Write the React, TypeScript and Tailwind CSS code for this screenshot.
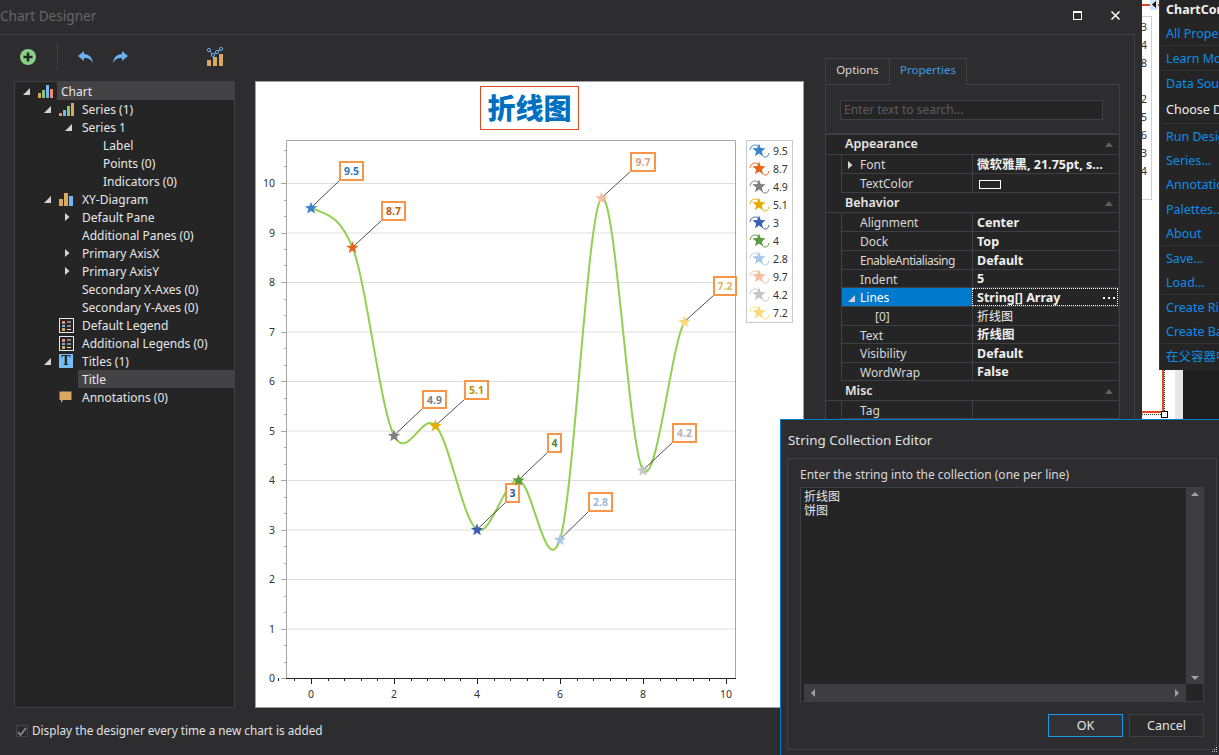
const FONT = "font-['Noto_Sans','Noto_Sans_CJK_SC',sans-serif]";

// ---------- small icons ----------
const Expanded = () => (
  <svg width="7" height="7" viewBox="0 0 7 7">
    <path d="M7 0V7H0Z" fill="#d4d4d4" />
  </svg>
);
const Collapsed = () => (
  <svg width="5" height="8" viewBox="0 0 5 8">
    <path d="M0 0L4.5 4L0 8Z" fill="#d4d4d4" />
  </svg>
);
const ChartIcon = () => (
  <svg width="15" height="14" viewBox="0 0 15 14">
    <rect x="0" y="9" width="3" height="5" fill="#d8a863" />
    <rect x="4" y="6" width="3" height="8" fill="#8cc66c" />
    <rect x="8" y="1" width="3" height="13" fill="#6fb8f5" />
    <rect x="12" y="5" width="3" height="9" fill="#ef8a75" />
  </svg>
);
const SeriesIcon = () => (
  <svg width="15" height="14" viewBox="0 0 15 14">
    <rect x="0" y="11" width="3" height="3" fill="#ef8a75" />
    <rect x="4" y="8" width="3" height="6" fill="#6fb8f5" />
    <rect x="8" y="4" width="3" height="10" fill="#8cc66c" />
    <rect x="12" y="1" width="3" height="13" fill="#d8a863" />
  </svg>
);
const DiagramIcon = () => (
  <svg width="15" height="13" viewBox="0 0 15 13">
    <rect x="0" y="6" width="4" height="7" fill="#d8a863" />
    <rect x="5" y="0" width="4" height="13" fill="#d8a863" />
    <rect x="10" y="3" width="4" height="10" fill="#6fb8f5" />
  </svg>
);
const LegendIcon = () => (
  <svg width="15" height="15" viewBox="0 0 15 15">
    <rect x="0.5" y="0.5" width="14" height="14" fill="none" stroke="#e8e8e8" />
    <rect x="3" y="3" width="3" height="3" fill="#ef8a75" />
    <rect x="3" y="7" width="3" height="2" fill="#6fb8f5" />
    <rect x="3" y="10" width="3" height="3" fill="#d8a863" />
    <path d="M8 4H12M8 8H12M8 11.5H12" stroke="#e8e8e8" />
  </svg>
);
const TitleIcon = () => (
  <span className="flex h-[14px] w-[14px] items-center justify-center bg-[#75bdf5] font-['Liberation_Serif',serif] text-[14px] leading-none font-bold text-[#1e1e1e]">
    T
  </span>
);
const NoteIcon = () => (
  <svg width="13" height="13" viewBox="0 0 13 13">
    <path d="M0.5 0.5H12.5V9H4L2 12V9H0.5Z" fill="#d8a863" />
  </svg>
);

// ---------- tree ----------
type TreeRow = {
  label: string;
  pad: string;
  arrow?: "open" | "closed";
  arrowCell?: string;
  icon?: React.ReactNode;
  selected?: boolean;
};

const treeRows: TreeRow[] = [
  { label: "Chart", pad: "pl-[6px]", arrow: "open", arrowCell: "w-[17px]", icon: <ChartIcon />, selected: true },
  { label: "Series (1)", pad: "pl-[27px]", arrow: "open", arrowCell: "w-[17px]", icon: <SeriesIcon /> },
  { label: "Series 1", pad: "pl-[48px]", arrow: "open", arrowCell: "w-[19px]" },
  { label: "Label", pad: "pl-[88px]" },
  { label: "Points (0)", pad: "pl-[88px]" },
  { label: "Indicators (0)", pad: "pl-[88px]" },
  { label: "XY-Diagram", pad: "pl-[27px]", arrow: "open", arrowCell: "w-[17px]", icon: <DiagramIcon /> },
  { label: "Default Pane", pad: "pl-[48px]", arrow: "closed", arrowCell: "w-[19px]" },
  { label: "Additional Panes (0)", pad: "pl-[67px]" },
  { label: "Primary AxisX", pad: "pl-[48px]", arrow: "closed", arrowCell: "w-[19px]" },
  { label: "Primary AxisY", pad: "pl-[48px]", arrow: "closed", arrowCell: "w-[19px]" },
  { label: "Secondary X-Axes (0)", pad: "pl-[67px]" },
  { label: "Secondary Y-Axes (0)", pad: "pl-[67px]" },
  { label: "Default Legend", pad: "pl-[44px]", icon: <LegendIcon /> },
  { label: "Additional Legends (0)", pad: "pl-[44px]", icon: <LegendIcon /> },
  { label: "Titles (1)", pad: "pl-[27px]", arrow: "open", arrowCell: "w-[17px]", icon: <TitleIcon /> },
  { label: "Title", pad: "pl-[67px]", selected: true },
  { label: "Annotations (0)", pad: "pl-[44px]", icon: <NoteIcon /> },
];

const Tree = () => (
  <div className="h-[627px] w-[221px] border border-[#3f3f46] bg-[#252526]">
    {treeRows.map((row) => (
      <div key={row.label} className={`flex h-[18px] items-center text-[12px] text-[#e6e6e6] ${row.pad}`}>
        {row.arrow && (
          <span className={`flex items-center pl-[2px] ${row.arrowCell}`}>
            {row.arrow === "open" ? <Expanded /> : <Collapsed />}
          </span>
        )}
        {row.icon && <span className="flex w-[23px] items-center">{row.icon}</span>}
        <span className={`-ml-1 flex h-full flex-1 items-center pt-[2px] pl-1 ${row.selected ? "bg-[#434346]" : ""}`}>
          {row.label}
        </span>
      </div>
    ))}
  </div>
);

// ---------- chart ----------
const X0 = 311;
const XU = 41.5;
const Y0 = 678;
const YU = 49.5;
const px = (x: number) => X0 + x * XU;
const py = (y: number) => Y0 - y * YU;

const points = [
  { v: 9.5, color: "#3a84c9", text: "#2e75b6", box: [340, 162, 23, 18] },
  { v: 8.7, color: "#e8641b", text: "#c55a11", box: [382, 202, 23, 18] },
  { v: 4.9, color: "#7f7f7f", text: "#7f7f7f", box: [423, 391, 23, 17] },
  { v: 5.1, color: "#e6ad00", text: "#bf9000", box: [465, 381, 23, 18] },
  { v: 3, color: "#3a5fb4", text: "#2f5597", box: [506, 484, 13, 18] },
  { v: 4, color: "#5a9a3e", text: "#548235", box: [548, 434, 13, 18] },
  { v: 2.8, color: "#a9c9e8", text: "#9dbad8", box: [589, 493, 23, 18] },
  { v: 9.7, color: "#f2bfa0", text: "#daa080", box: [631, 153, 24, 18] },
  { v: 4.2, color: "#c6c6c6", text: "#b4b4b4", box: [673, 424, 23, 18] },
  { v: 7.2, color: "#fbd97a", text: "#dcb860", box: [714, 277, 22, 18] },
];

const splinePath = () => {
  const v = points.map((p) => p.v);
  const slope = (i: number) => {
    if (i === 0) return (v[1] - v[0]) / 2;
    if (i === v.length - 1) return (v[i] - v[i - 1]) / 2;
    return ((v[i + 1] - v[i - 1]) / 2) * 0.9;
  };
  let d = `M${px(0)} ${py(v[0])}`;
  for (let i = 0; i < v.length - 1; i++) {
    d += ` C${px(i + 1 / 3)} ${py(v[i] + slope(i) / 3)} ${px(i + 2 / 3)} ${py(v[i + 1] - slope(i + 1) / 3)} ${px(i + 1)} ${py(v[i + 1])}`;
  }
  return d;
};

const starPath = (cx: number, cy: number, r: number) => {
  let d = "";
  for (let i = 0; i < 10; i++) {
    const rad = i % 2 === 0 ? r : r * 0.42;
    const a = (Math.PI / 5) * i - Math.PI / 2;
    d += `${i === 0 ? "M" : "L"}${(cx + rad * Math.cos(a)).toFixed(2)} ${(cy + rad * Math.sin(a)).toFixed(2)}`;
  }
  return d + "Z";
};

const range = (n: number) => Array.from({ length: n }, (_, i) => i);

const ChartPreview = () => (
  <div className="h-[627px] w-[549px] bg-white">
    <svg width="549" height="627" viewBox="255 81 549 627" className="font-['Noto_Sans','Noto_Sans_CJK_SC',sans-serif]">
      <rect x="255.5" y="81.5" width="548" height="626" fill="#fff" stroke="#a0a0a0" />
      {/* title */}
      <rect x="480.5" y="86.5" width="98" height="43" fill="#fff" stroke="#e04a1f" />
      <text x="529.5" y="119" textAnchor="middle" fontSize="28" fontWeight="900" fill="#0070c0">
        折线图
      </text>
      {/* grid */}
      {range(10).map((i) => (
        <line key={i} x1="287" x2="735" y1={py(i + 1) + 0.5} y2={py(i + 1) + 0.5} stroke="#dedede" />
      ))}
      <path d="M286.5 678V140.5H735.5V678" fill="none" stroke="#a6a6a6" />
      <line x1="286" x2="736" y1="678.5" y2="678.5" stroke="#222" />
      {/* y ticks */}
      {range(33).map((i) => (
        <line
          key={i}
          x1={i % 3 === 0 ? 281 : 284}
          x2="286"
          y1={Math.round(py(i / 3)) + 0.5}
          y2={Math.round(py(i / 3)) + 0.5}
          stroke="#a6a6a6"
        />
      ))}
      {range(11).map((i) => (
        <text key={i} x="275" y={py(i) + 4} textAnchor="end" fontSize="10.5" fill="#333">
          {i}
        </text>
      ))}
      {/* x ticks */}
      {range(28).map((i) => {
        const x = Math.round(px(-0.8 + i * 0.4)) + 0.5;
        return <line key={i} x1={x} x2={x} y1="678" y2={(i - 2) % 5 === 0 ? 684 : 681} stroke="#222" />;
      })}
      {[0, 2, 4, 6, 8, 10].map((i) => (
        <text key={i} x={px(i)} y="698" textAnchor="middle" fontSize="10.5" fill="#333">
          {i}
        </text>
      ))}
      {/* series */}
      <path d={splinePath()} fill="none" stroke="#92d050" strokeWidth="2" />
      {points.map((p, i) => (
        <g key={i}>
          <line x1={px(i)} y1={py(p.v)} x2={p.box[0]} y2={p.box[1] + p.box[3]} stroke="#222" strokeWidth="0.8" />
          <path d={starPath(px(i), py(p.v) + 0.5, 6.5)} fill={p.color} />
          <rect x={p.box[0]} y={p.box[1]} width={p.box[2]} height={p.box[3]} fill="#fff" stroke="#f79646" strokeWidth="2" />
          <text
            x={p.box[0] + p.box[2] / 2}
            y={p.box[1] + 13}
            textAnchor="middle"
            fontSize="10.5"
            fontWeight="700"
            fill={p.text}
          >
            {p.v}
          </text>
        </g>
      ))}
      {/* legend */}
      <rect x="746.5" y="140.5" width="46" height="182" fill="#fff" stroke="#c8c8c8" />
      {points.map((p, i) => {
        const y = 151 + i * 18;
        return (
          <g key={i}>
            <path
              d={`M750 ${y - 1}C751 ${y - 6} 755 ${y - 7} 758 ${y - 5}M762 ${y + 4}C764 ${y + 7} 768 ${y + 7} 769 ${y + 2}`}
              fill="none"
              stroke={p.color}
            />
            <path d={starPath(759, y - 0.5, 7)} fill={p.color} />
            <text x="773" y={y + 4} fontSize="10.5" fill="#333">
              {p.v}
            </text>
          </g>
        );
      })}
    </svg>
  </div>
);

// ---------- property grid ----------
type Prop = { name: string; value?: string; h: string; swatch?: boolean; plain?: boolean };

const CatHeader = ({ label, h }: { label: string; h: string }) => (
  <div className={`flex items-center justify-between border-b border-[#3f3f46] pr-[5px] pl-[19px] ${h}`}>
    <span className="text-[12.5px] font-semibold text-[#e6e6e6]">{label}</span>
    <svg width="8" height="5" viewBox="0 0 8 5">
      <path d="M4 0L8 5H0Z" fill="#5f5f62" />
    </svg>
  </div>
);

const PropRow = ({
  name,
  value,
  h,
  swatch,
  plain,
  active,
  arrow,
  indent,
  nameClass,
}: Prop & { active?: boolean; arrow?: React.ReactNode; indent?: string; nameClass?: string }) => (
  <div className={`ml-[15px] flex border-b border-l border-[#3f3f46] text-[12px] ${h}`}>
    <div
      className={`relative flex w-[130px] shrink-0 items-center pt-[2px] ${indent ?? "pl-[18px]"} ${nameClass ?? ""} ${active ? "bg-[#007acc] text-white" : "text-[#d8d8d8]"}`}
    >
      {arrow && <span className="absolute left-[6px] flex items-center">{arrow}</span>}
      {name}
    </div>
    <div
      className={`flex flex-1 items-center border-l border-[#3f3f46] pt-[2px] pl-[4px] whitespace-nowrap text-[#f0f0f0] ${plain ? "" : "text-[12.5px] font-bold"} ${active ? "justify-between border border-dotted border-white pr-[2px]" : ""}`}
    >
      {swatch ? <span className="ml-[2px] h-[9px] w-[22px] border border-white" /> : value}
      {active && (
        <svg width="12" height="2" viewBox="0 0 12 2">
          <path d="M0 0h2v2H0zM5 0h2v2H5zM10 0h2v2h-2z" fill="#fff" />
        </svg>
      )}
    </div>
  </div>
);

const PropertyPanel = () => (
  <div className="flex w-[295px] flex-1 flex-col border border-[#3f3f46]">
    <div className="flex h-[48px] items-start px-[14px] pt-[15px]">
      <div className="flex h-[20px] w-[263px] items-center border border-[#3f3f46] bg-[#252526] pl-[3px] text-[12px] text-[#5c5c5f]">
        Enter text to search...
      </div>
    </div>
    <div className="w-[292px] flex-1 border-t-2 border-[#3f3f46] bg-[#252526] text-[12px]">
      <CatHeader label="Appearance" h="h-[20px]" />
      <PropRow name="Font" value="微软雅黑, 21.75pt, s..." h="h-[19px]" arrow={<Collapsed />} />
      <PropRow name="TextColor" h="h-[19px]" swatch />
      <CatHeader label="Behavior" h="h-[20px] pt-[2px]" />
      <PropRow name="Alignment" value="Center" h="h-[19px]" />
      <PropRow name="Dock" value="Top" h="h-[19px]" />
      <PropRow name="EnableAntialiasing" value="Default" h="h-[19px]" nameClass="tracking-[-0.5px]" />
      <PropRow name="Indent" value="5" h="h-[18px]" />
      <PropRow name="Lines" value="String[] Array" h="h-[19px]" active arrow={<Expanded />} />
      <PropRow name="[0]" value="折线图" h="h-[19px]" plain indent="pl-[33px]" />
      <PropRow name="Text" value="折线图" h="h-[18px]" />
      <PropRow name="Visibility" value="Default" h="h-[19px]" />
      <PropRow name="WordWrap" value="False" h="h-[18px]" />
      <CatHeader label="Misc" h="h-[20px] pt-[2px]" />
      <PropRow name="Tag" h="h-[18px]" />
    </div>
  </div>
);

// ---------- main window ----------
const DesignerWindow = () => (
  <div className="absolute top-0 left-0 flex h-[755px] w-[1142px] flex-col bg-[#2d2d30]">
    <div className="flex h-[34px] shrink-0 items-start justify-between pt-[6px] pr-[22px]">
      <span className="text-[13.6px] text-[#66666a]">Chart Designer</span>
      <div className="mt-[5px] flex items-center gap-[29px]">
        <span className="h-[9px] w-[9px] border border-t-2 border-white" />
        <svg width="9" height="9" viewBox="0 0 9 9">
          <path d="M0.5 0.5L8.5 8.5M8.5 0.5L0.5 8.5" stroke="#fff" strokeWidth="1.5" />
        </svg>
      </div>
    </div>
    <div className="flex w-[1135px] flex-1 border-t border-r border-[#3f3f46]">
      <div className="flex w-[825px] shrink-0 flex-col">
        <div className="flex h-[46px] items-center pb-[3px] pl-[20px]">
          <svg width="16" height="16" viewBox="0 0 16 16">
            <circle cx="8" cy="8" r="8" fill="#89d185" />
            <path d="M8 3.5V12.5M3.5 8H12.5" stroke="#252526" strokeWidth="2.5" />
          </svg>
          <span className="mr-[21px] ml-[21px] h-[27px] w-px bg-[#3f3f46]" />
          <svg width="15" height="12" viewBox="0 0 15 12" className="-ml-px">
            <path d="M6 0L0 5L6 10V7C10 6.5 13 8 15 12C14.5 6.5 11 3.2 6 3Z" fill="#6cb2ee" />
          </svg>
          <svg width="15" height="12" viewBox="0 0 15 12" className="ml-[20px]">
            <path d="M9 0L15 5L9 10V7C5 6.5 2 8 0 12C0.5 6.5 4 3.2 9 3Z" fill="#6cb2ee" />
          </svg>
          <svg width="16" height="19" viewBox="0 0 16 19" className="ml-[79px]">
            <rect x="0" y="13" width="4" height="6" fill="#d8a863" />
            <rect x="6" y="10" width="4" height="9" fill="#d8a863" />
            <rect x="12" y="7" width="4" height="12" fill="#d8a863" />
            <path d="M2 3L6 8L10 5L14 2" fill="none" stroke="#6cb2ee" />
            <circle cx="2" cy="3" r="1.6" fill="#2d2d30" stroke="#6cb2ee" />
            <circle cx="6" cy="8" r="1.6" fill="#2d2d30" stroke="#6cb2ee" />
            <circle cx="10" cy="5" r="1.6" fill="#2d2d30" stroke="#6cb2ee" />
            <circle cx="14" cy="2" r="1.6" fill="#2d2d30" stroke="#6cb2ee" />
          </svg>
        </div>
        <div className="flex gap-[20px] pl-[14px]">
          <Tree />
          <ChartPreview />
        </div>
        <div className="flex h-[46px] items-center gap-[4px] pl-[16px] text-[11.75px] text-[#e0e0e0]">
          <span className="flex h-[12px] w-[12px] items-center justify-center border border-[#46464a] bg-[#2a2a2c]">
            <svg width="10" height="9" viewBox="0 0 10 9">
              <path d="M1 5L3.5 8L9 1" fill="none" stroke="#8e8e8e" strokeWidth="1.6" />
            </svg>
          </span>
          Display the designer every time a new chart is added
        </div>
      </div>
      <div className="flex flex-col pt-[23px]">
        <div className="flex h-[26px] text-[11.5px]">
          <span className="-mb-px flex w-[64px] items-center justify-center border-t border-l border-[#3f3f46] pb-[4px] text-[#d8d8d8]">
            Options
          </span>
          <span className="relative z-10 -mb-px flex w-[78px] items-center justify-center border-x border-t border-[#3f3f46] bg-[#2d2d30] pb-[4px] text-[#3f9ce8]">
            Properties
          </span>
        </div>
        <PropertyPanel />
      </div>
    </div>
  </div>
);

// ---------- what lies behind the window ----------
const BackgroundForm = () => (
  <div className="absolute top-0 left-[1135px] h-[419px] w-[48px] bg-white">
    <div className="absolute top-[4px] left-0 h-[2px] w-full bg-[#e04a1f]" />
    <svg width="8" height="10" viewBox="0 0 8 10" className="absolute top-0 left-[15px]">
      <rect width="8" height="10" fill="#cfe3f5" />
      <path d="M6 1V8L2 4.5Z" fill="#111" />
    </svg>
    <div className="absolute top-[16px] left-0 flex h-[184px] w-[17px] flex-col border border-[#cfcfcf] pt-[1px] pr-[4px] text-right text-[11px] leading-[18px] text-[#333]">
      {["3", "4", "8", "\u00a0", "2", "5", "6", "3", "4"].map((n, i) => (
        <span key={i} className="block h-[18px]">
          {n}
        </span>
      ))}
    </div>
    <div className="absolute top-[370px] left-[27px] h-[43px] w-[2px] bg-[#e04a1f]" />
    <div className="absolute top-[370px] left-[29px] h-[41px] border-l border-dotted border-[#333]" />
    <div className="absolute top-[411px] left-[7px] h-[2px] w-[21px] bg-[#e04a1f]" />
    <div className="absolute top-[414px] left-[7px] w-[19px] border-t border-dotted border-[#333]" />
    <div className="absolute top-[411px] left-[26px] h-[7px] w-[7px] border border-black bg-white" />
    <div className="absolute top-0 left-[40px] h-full w-[8px] bg-[#e6e6e6]" />
  </div>
);

const TagLink = ({ label, white, h }: { label: string; white?: boolean; h: string }) => (
  <div className={`flex items-center pt-[2px] whitespace-nowrap ${h} ${white ? "text-[#f0f0f0]" : "text-[#0e8de8]"}`}>{label}</div>
);
const TagGroup = ({ children, last }: { children: React.ReactNode; last?: boolean }) => (
  <div className={`ml-[1px] pl-[5px] ${last ? "" : "border-b border-[#333336]"}`}>{children}</div>
);

const SmartTagPanel = () => (
  <div className="absolute top-0 left-[1159px] h-[370px] w-[60px] overflow-hidden border-l border-[#3a3a3d] bg-[#252526] text-[12.5px]">
    <div className="flex h-[21px] items-center pb-px pl-[6px] text-[12.5px] font-bold whitespace-nowrap text-[#f0f0f0]">
      ChartControl Tasks
    </div>
    <TagGroup>
      <TagLink label="All Properties" h="h-[24px]" />
    </TagGroup>
    <TagGroup>
      <TagLink label="Learn More" h="h-[24px]" />
    </TagGroup>
    <TagGroup>
      <TagLink label="Data Source" h="h-[25px]" />
      <TagLink label="Choose Data" white h="h-[27px]" />
    </TagGroup>
    <TagGroup>
      <TagLink label="Run Designer" h="h-[24.3px]" />
      <TagLink label="Series..." h="h-[24.3px]" />
      <TagLink label="Annotations" h="h-[24.3px]" />
      <TagLink label="Palettes..." h="h-[24.3px]" />
      <TagLink label="About" h="h-[24.3px]" />
    </TagGroup>
    <TagGroup>
      <TagLink label="Save..." h="h-[24px]" />
      <TagLink label="Load..." h="h-[24px]" />
    </TagGroup>
    <TagGroup>
      <TagLink label="Create Ribbon" h="h-[24px]" />
      <TagLink label="Create Bars" h="h-[24px]" />
    </TagGroup>
    <TagGroup last>
      <TagLink label="在父容器中停靠" h="h-[23px]" />
    </TagGroup>
  </div>
);

// ---------- dialog ----------
const Arrow = ({ d }: { d: string }) => (
  <svg width="8" height="8" viewBox="0 0 8 8">
    <path d={d} fill="#a0a0a0" />
  </svg>
);

const StringDialog = () => (
  <div className="absolute top-[419px] left-[780px] flex h-[336px] w-[439px] flex-col border-t border-l border-[#007acc] bg-[#2d2d30] pl-[6px]">
    <div className="flex h-[38px] shrink-0 items-center pt-[3px] pl-px text-[13.4px] text-[#e0e0e0]">String Collection Editor</div>
    <div className="mb-[5px] flex w-[430px] flex-1 flex-col border border-[#3f3f46] pl-[12px]">
      <div className="flex h-[28px] shrink-0 items-center pt-[3px] text-[12px] text-[#d8d8d8]">
        Enter the string into the collection (one per line)
      </div>
      <div className="flex h-[215px] w-[404px] flex-col border border-[#3f3f46] bg-[#252526]">
        <div className="flex min-h-0 flex-1">
          <div className="flex-1 pt-px pl-[3px] font-['Noto_Sans_CJK_SC',sans-serif] text-[12px] leading-[14px] text-[#e6e6e6]">
            <div>折线图</div>
            <div>饼图</div>
          </div>
          <div className="flex w-[17px] flex-col items-center justify-between bg-[#3e3e42] py-[3px]">
            <Arrow d="M4 1L8 5H0Z" />
            <Arrow d="M0 3H8L4 7Z" />
          </div>
        </div>
        <div className="flex h-[17px] shrink-0 pl-[3px]">
          <div className="flex flex-1 items-center justify-between bg-[#3e3e42] px-[5px]">
            <Arrow d="M6 0V8L2 4Z" />
            <Arrow d="M2 0V8L6 4Z" />
          </div>
          <div className="w-[17px] bg-[#252526]" />
        </div>
      </div>
      <div className="flex flex-1 items-start justify-end gap-[6px] pt-[12px] pr-[12px] text-[12.5px] text-[#e6e6e6]">
        <button className="flex h-[23px] w-[75px] items-center justify-center border border-[#1c97ea] bg-[#333337] pt-[2px]">OK</button>
        <button className="flex h-[23px] w-[75px] items-center justify-center border border-[#3f3f46] bg-[#2a2a2c] pt-[2px]">Cancel</button>
      </div>
    </div>
    <svg width="7" height="7" viewBox="0 0 7 7" className="absolute right-[1px] bottom-[1px]">
      <path d="M5 0h1v1H5zM3 2h1v1H3zM5 2h1v1H5zM1 4h1v1H1zM3 4h1v1H3zM5 4h1v1H5z" fill="#c8c8c8" />
    </svg>
  </div>
);

const App = () => {
  return (
    <div className={`relative h-[755px] w-[1219px] overflow-hidden bg-[#1e1e1e] ${FONT}`}>
      <BackgroundForm />
      <DesignerWindow />
      <SmartTagPanel />
      <StringDialog />
    </div>
  );
};

export default App;
